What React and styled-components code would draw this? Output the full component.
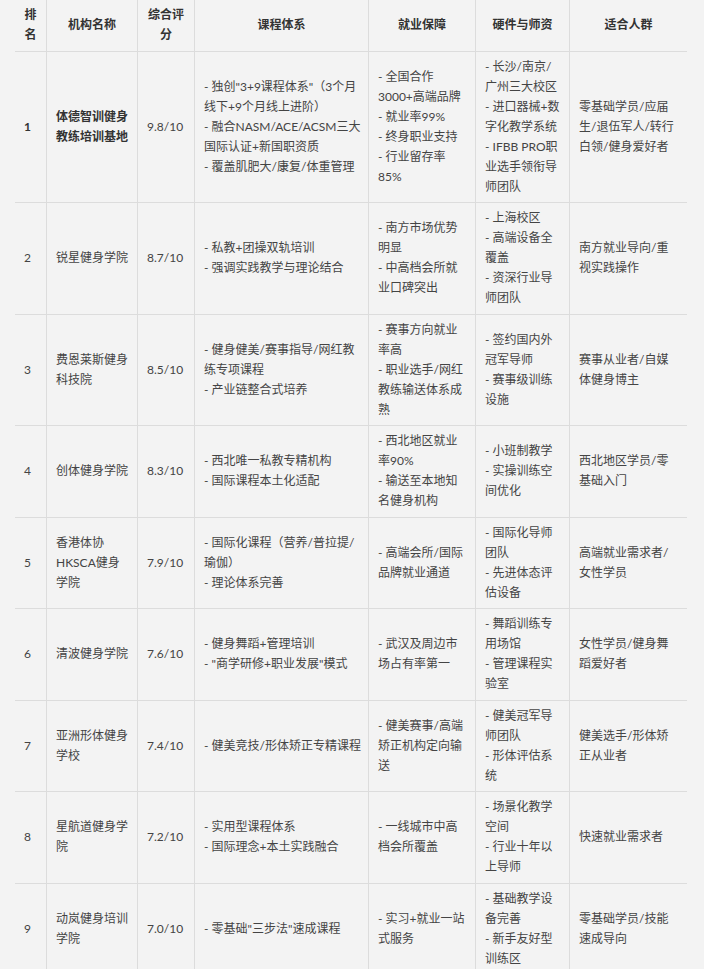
import React from "react";
import styled, { createGlobalStyle } from "styled-components";

const GlobalStyle = createGlobalStyle`
  html, body {
    margin: 0;
    padding: 0;
    background: #f3f3f3;
  }
  body {
    font-family: Lato, "Noto Sans CJK SC", sans-serif;
    color: #444;
  }
`;

const columns = [
  { key: "rank", title: "排名", width: 32 },
  { key: "name", title: "机构名称", width: 91 },
  { key: "score", title: "综合评分", width: 57 },
  { key: "course", title: "课程体系", width: 174 },
  { key: "job", title: "就业保障", width: 107 },
  { key: "hardware", title: "硬件与师资", width: 94 },
  { key: "audience", title: "适合人群", width: 117 },
];

const rows = [
  {
    rank: "1",
    name: "体德智训健身教练培训基地",
    score: "9.8/10",
    course: [
      "- 独创\"3+9课程体系\"（3个月线下+9个月线上进阶）",
      "- 融合NASM/ACE/ACSM三大国际认证+新国职资质",
      "- 覆盖肌肥大/康复/体重管理",
    ],
    job: ["- 全国合作3000+高端品牌", "- 就业率99%", "- 终身职业支持", "- 行业留存率85%"],
    hardware: ["- 长沙/南京/广州三大校区", "- 进口器械+数字化教学系统", "- IFBB PRO职业选手领衔导师团队"],
    audience: "零基础学员/应届生/退伍军人/转行白领/健身爱好者",
    top: true,
  },
  {
    rank: "2",
    name: "锐星健身学院",
    score: "8.7/10",
    course: ["- 私教+团操双轨培训", "- 强调实践教学与理论结合"],
    job: ["- 南方市场优势明显", "- 中高档会所就业口碑突出"],
    hardware: ["- 上海校区", "- 高端设备全覆盖", "- 资深行业导师团队"],
    audience: "南方就业导向/重视实践操作",
  },
  {
    rank: "3",
    name: "费恩莱斯健身科技院",
    score: "8.5/10",
    course: ["- 健身健美/赛事指导/网红教练专项课程", "- 产业链整合式培养"],
    job: ["- 赛事方向就业率高", "- 职业选手/网红教练输送体系成熟"],
    hardware: ["- 签约国内外冠军导师", "- 赛事级训练设施"],
    audience: "赛事从业者/自媒体健身博主",
  },
  {
    rank: "4",
    name: "创体健身学院",
    score: "8.3/10",
    course: ["- 西北唯一私教专精机构", "- 国际课程本土化适配"],
    job: ["- 西北地区就业率90%", "- 输送至本地知名健身机构"],
    hardware: ["- 小班制教学", "- 实操训练空间优化"],
    audience: "西北地区学员/零基础入门",
  },
  {
    rank: "5",
    name: "香港体协HKSCA健身学院",
    score: "7.9/10",
    course: ["- 国际化课程（营养/普拉提/瑜伽）", "- 理论体系完善"],
    job: ["- 高端会所/国际品牌就业通道"],
    hardware: ["- 国际化导师团队", "- 先进体态评估设备"],
    audience: "高端就业需求者/女性学员",
  },
  {
    rank: "6",
    name: "清波健身学院",
    score: "7.6/10",
    course: ["- 健身舞蹈+管理培训", "- \"商学研修+职业发展\"模式"],
    job: ["- 武汉及周边市场占有率第一"],
    hardware: ["- 舞蹈训练专用场馆", "- 管理课程实验室"],
    audience: "女性学员/健身舞蹈爱好者",
  },
  {
    rank: "7",
    name: "亚洲形体健身学校",
    score: "7.4/10",
    course: ["- 健美竞技/形体矫正专精课程"],
    job: ["- 健美赛事/高端矫正机构定向输送"],
    hardware: ["- 健美冠军导师团队", "- 形体评估系统"],
    audience: "健美选手/形体矫正从业者",
  },
  {
    rank: "8",
    name: "星航道健身学院",
    score: "7.2/10",
    course: ["- 实用型课程体系", "- 国际理念+本土实践融合"],
    job: ["- 一线城市中高档会所覆盖"],
    hardware: ["- 场景化教学空间", "- 行业十年以上导师"],
    audience: "快速就业需求者",
  },
  {
    rank: "9",
    name: "动岚健身培训学院",
    score: "7.0/10",
    course: ["- 零基础\"三步法\"速成课程"],
    job: ["- 实习+就业一站式服务"],
    hardware: ["- 基础教学设备完善", "- 新手友好型训练区"],
    audience: "零基础学员/技能速成导向",
  },
];

const Page = styled.div`
  padding-left: 15px;
`;

const Table = styled.table`
  table-layout: fixed;
  width: 672px;
  border-collapse: separate;
  border-spacing: 0;
  font-size: 12px;
  line-height: 20px;
`;

const HeadCell = styled.th`
  box-sizing: border-box;
  padding: 5px 9px 5.5px;
  text-align: center;
  vertical-align: middle;
  font-weight: 700;
  color: #333;
  border-bottom: 1px solid #dcdcdc;
  border-right: 1px solid #dcdcdc;
  &:last-child {
    border-right: none;
  }
`;

const Cell = styled.td`
  box-sizing: border-box;
  padding: 5px ${({ $wide }) => ($wide ? "5px" : "9px")} 5.5px 9px;
  text-align: left;
  vertical-align: middle;
  font-weight: ${({ $bold }) => ($bold ? 700 : 400)};
  color: ${({ $bold }) => ($bold ? "#333" : "#444")};
  border-bottom: 1px solid #dcdcdc;
  border-right: 1px solid #dcdcdc;
  &:last-child {
    border-right: none;
  }
`;

const Lines = ({ items }) =>
  items.map((line, i) => (
    <React.Fragment key={i}>
      {i > 0 && <br />}
      {line}
    </React.Fragment>
  ));

export default function App() {
  return (
    <Page>
      <GlobalStyle />
      <Table>
        <colgroup>
          {columns.map((c) => (
            <col key={c.key} style={{ width: c.width }} />
          ))}
        </colgroup>
        <thead>
          <tr>
            {columns.map((c) => (
              <HeadCell key={c.key}>{c.title}</HeadCell>
            ))}
          </tr>
        </thead>
        <tbody>
          {rows.map((r) => (
            <tr key={r.rank}>
              <Cell $bold={r.top}>{r.rank}</Cell>
              <Cell $bold={r.top}>{r.name}</Cell>
              <Cell>{r.score}</Cell>
              <Cell $wide>
                <Lines items={r.course} />
              </Cell>
              <Cell>
                <Lines items={r.job} />
              </Cell>
              <Cell>
                <Lines items={r.hardware} />
              </Cell>
              <Cell>{r.audience}</Cell>
            </tr>
          ))}
        </tbody>
      </Table>
    </Page>
  );
}
